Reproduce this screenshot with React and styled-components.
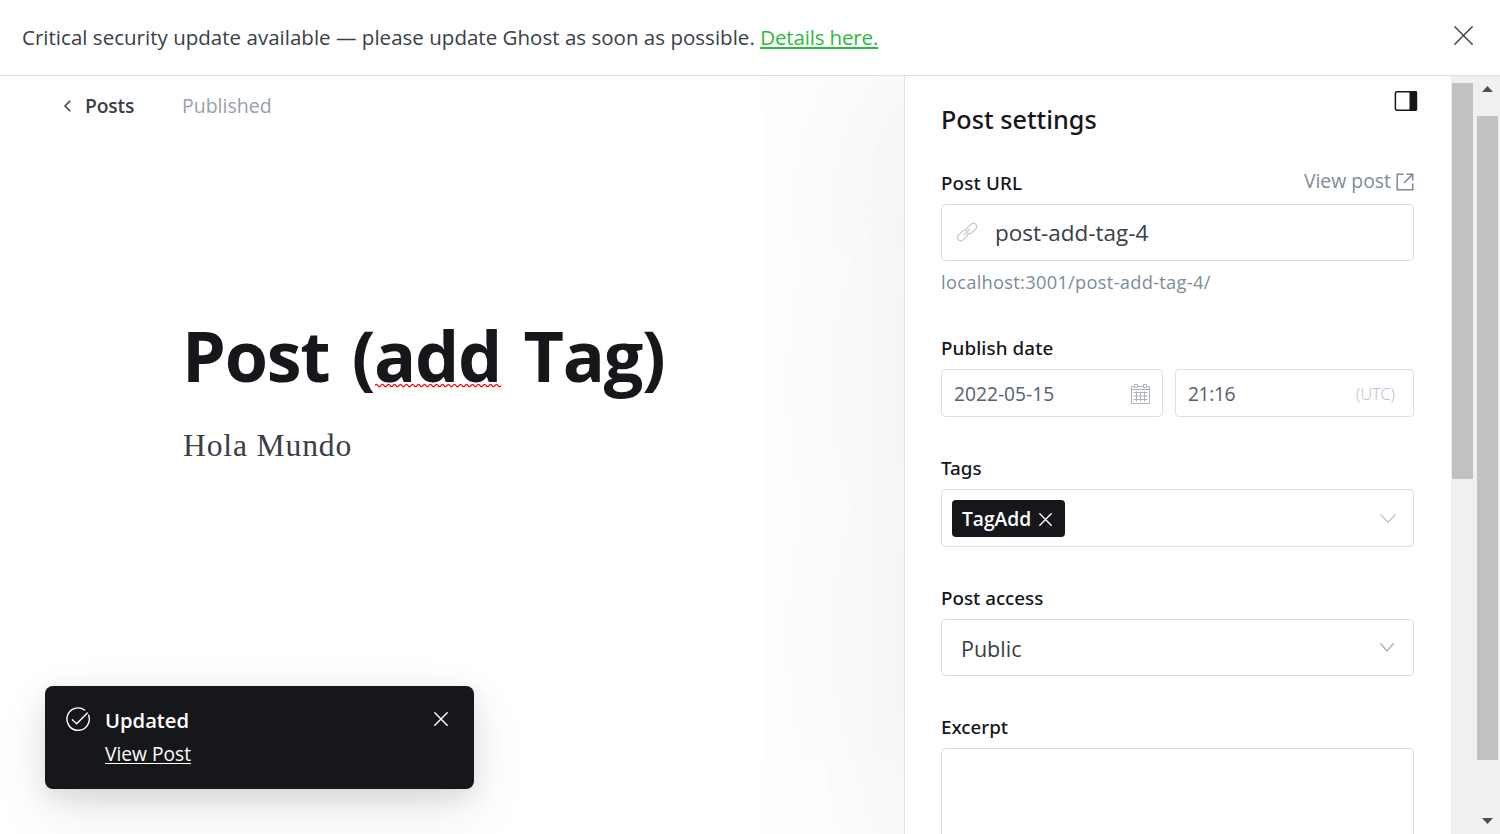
import React from 'react';
import styled, { createGlobalStyle } from 'styled-components';

const GlobalStyle = createGlobalStyle`
  * { box-sizing: border-box; }
  body {
    margin: 0;
    overflow: hidden;
    background: #fff;
    color: #394047;
    font-family: 'Open Sans', 'Noto Sans', sans-serif;
  }
  svg { display: block; flex: none; fill: none; }
`;

const Page = styled.div`
  display: flex;
  flex-direction: column;
  width: 1500px;
  height: 834px;
  overflow: hidden;
`;

const Banner = styled.header`
  display: flex;
  flex: none;
  align-items: center;
  justify-content: space-between;
  height: 76px;
  padding: 0 28px 2px 22px;
  border-bottom: 1px solid #dfe1e3;
  font-size: 20.5px;
  letter-spacing: 0.02px;
  line-height: 28px;
  white-space: pre;
`;

const BannerClose = styled.span`
  margin: 0 -0.5px 2px 0;
`;

const BannerLink = styled.a`
  color: #2bba3c;
  letter-spacing: -0.14px;
  text-decoration: underline;
  text-decoration-thickness: 2px;
  text-underline-offset: 2px;
`;

const Workspace = styled.div`
  display: flex;
  flex: 1;
  min-height: 0;
  overflow: hidden;
`;

const Editor = styled.main`
  display: flex;
  flex: none;
  flex-direction: column;
  width: 904px;
`;

const EditorBar = styled.nav`
  display: flex;
  align-items: center;
  height: 28px;
  margin-top: 16px;
  padding-left: 63px;
  font-size: 19.3px;
  line-height: 28px;
`;

const BackLink = styled.a`
  display: flex;
  align-items: center;
  gap: 13px;
  width: 119px;
  font-weight: 600;
  letter-spacing: -0.15px;
`;

const Status = styled.span`
  color: #95a1ad;
  font-size: 19.5px;
`;

const Title = styled.h1`
  height: 96px;
  margin: 187px 0 0 182px;
  color: #15171a;
  font-size: 70px;
  font-weight: 700;
  letter-spacing: -1.3px;
  line-height: 96px;
  white-space: nowrap;
  word-spacing: 5.5px;
`;

const Misspelled = styled.span`
  position: relative;

  svg {
    position: absolute;
    left: 1px;
    bottom: 15px;
  }
`;

const Body = styled.p`
  margin: 23px 0 0 183px;
  font-family: 'Liberation Serif', serif;
  font-size: 31.6px;
  letter-spacing: 0.85px;
  line-height: 40px;
`;

const Settings = styled.aside`
  flex: none;
  width: 547px;
  height: 776px;
  padding: 14px 37px 0 36px;
  border-left: 1px solid #dfe3e7;
  background: #fff;
  box-shadow: 0 0 300px 50px rgba(0, 0, 0, 0.045), 0 0 120px rgba(0, 0, 0, 0.04);
`;

const SettingsHeader = styled.div`
  display: flex;
  justify-content: space-between;
  height: 48px;
  margin: 0 -4px 33px 0;
`;

const SettingsTitle = styled.h2`
  margin: 11px 0 0;
  color: #15171a;
  font: 500 25.2px/36px 'Noto Sans', sans-serif;
`;

const Field = styled.section`
  margin-bottom: 39px;
`;

const FieldHead = styled.div`
  display: flex;
  justify-content: space-between;
  height: 24px;
  margin-bottom: 9px;
`;

const Label = styled.label`
  color: #15171a;
  font: 500 18.8px/24px 'Noto Sans', sans-serif;
  letter-spacing: ${({ $spacing }) => $spacing || 0}px;
`;

const ViewLink = styled.a`
  display: flex;
  align-items: center;
  gap: 5px;
  height: 21px;
  color: #7c8b9a;
  font-size: 19.4px;
  line-height: 19px;

  span { margin-top: -2px; }
`;

const Control = styled.div`
  display: flex;
  align-items: center;
  height: ${({ $height }) => $height || 57}px;
  padding: ${({ $padding }) => $padding || '0 20px 0 19px'};
  border: 1px solid #dddfe1;
  border-radius: 4px;
  font-size: 21.5px;
  line-height: 30px;
`;

const SpacedControl = styled(Control)`
  justify-content: space-between;
`;

const DateRow = styled.div`
  display: grid;
  grid-template-columns: 222px 239px;
  gap: 12px;
`;

const DateControl = styled(SpacedControl)`
  color: #54606b;
  font-size: 19.2px;
  letter-spacing: ${({ $spacing }) => $spacing || 0}px;
`;

const Slug = styled.span`
  margin: 2px 0 0 18px;
  font-size: 22.5px;
`;

const SelectValue = styled.span`
  margin-top: 2px;
`;

const Zone = styled.span`
  color: #b3bdc6;
  font-size: 16.2px;
  font-weight: 300;
  letter-spacing: 0;
`;

const Help = styled.p`
  margin: 9px 0 42px;
  color: #7c8b9a;
  font-size: 18.3px;
  letter-spacing: 0.28px;
  line-height: 24px;
`;

const Tag = styled.span`
  display: flex;
  align-items: center;
  gap: 8px;
  width: 113px;
  height: 37px;
  padding: 1px 0 0 10px;
  border-radius: 4px;
  background: #15171a;
  color: #fff;
  font-size: 19.2px;
  font-weight: 600;

  svg { margin-top: 2px; }
`;

const TextArea = styled(Control)`
  height: 140px;
`;

const Scrollbars = styled.div`
  display: flex;
  flex: 1;
  gap: 4px;
  padding: 0 2px 0 1px;
  background: #f0f0f0;
`;

const Track = styled.div`
  display: flex;
  flex-direction: column;
  align-items: center;
  width: 21px;
  padding-top: ${({ $top }) => $top}px;
`;

const Thumb = styled.div`
  width: 21px;
  height: ${({ $height }) => $height}px;
  margin: ${({ $margin }) => $margin || 0};
  background: #c1c1c1;
`;

const Toast = styled.div`
  position: absolute;
  top: 686px;
  left: 45px;
  display: flex;
  align-items: flex-start;
  width: 429px;
  height: 103px;
  padding: 21px 26px 0 21px;
  border-radius: 8px;
  background: #15171a;
  box-shadow: 0 0 40px rgba(0, 0, 0, 0.04), 0 10px 24px rgba(0, 0, 0, 0.08),
    0 24px 60px rgba(0, 0, 0, 0.08);
  color: #fff;
`;

const ToastText = styled.div`
  display: flex;
  flex: 1;
  flex-direction: column;
  align-items: flex-start;
  margin: -2px 0 0 15px;
`;

const ToastTitle = styled.strong`
  font-size: 20.2px;
  font-weight: 600;
  line-height: 30px;
`;

const ToastLink = styled.a`
  margin-top: 4px;
  font-size: 19.2px;
  line-height: 30px;
  text-decoration: underline;
  text-decoration-thickness: 1px;
  text-underline-offset: 2px;
  text-decoration-skip-ink: none;
`;

const ToastClose = styled.span`
  margin-top: 5px;
`;

const Cross = ({ size, width = 1.4, color = 'currentColor' }) => (
  <svg width={size} height={size} viewBox={`0 0 ${size} ${size}`} stroke={color} strokeWidth={width} strokeLinecap="round">
    <path d={`M.8.8 ${size - 0.8} ${size - 0.8}M${size - 0.8}.8.8 ${size - 0.8}`} />
  </svg>
);

const Chevron = ({ width, height, stroke }) => (
  <svg width={width} height={height} stroke="#aeb7c1" strokeWidth={stroke} strokeLinecap="round" strokeLinejoin="round">
    <path d={`M.8.8 ${width / 2} ${height - 0.9} ${width - 0.8}.8`} />
  </svg>
);

const BackIcon = () => (
  <svg width="9" height="12" stroke="#394047" strokeWidth="1.6" strokeLinecap="round" strokeLinejoin="round">
    <path d="M6.8 1.2 1.9 6l4.9 4.8" />
  </svg>
);

const PanelIcon = () => (
  <svg width="24" height="22">
    <rect x="1.4" y="1.7" width="21" height="18.6" rx="1.6" stroke="#15171a" strokeWidth="1.5" />
    <path d="M15.5 1h6.2a1.4 1.4 0 0 1 1.4 1.4v17.2a1.4 1.4 0 0 1-1.4 1.4h-6.2z" fill="#15171a" />
  </svg>
);

const ExternalIcon = () => (
  <svg width="18" height="18" stroke="#7c8b9a" strokeWidth="1.5">
    <path d="M7.5 1.2H1.2v15.6h15.6v-6.3M10.5 1.2h6.3v6.3M16.6 1.4 8 10" />
  </svg>
);

const LinkIcon = () => (
  <svg width="20" height="20" viewBox="0 0 20 20" stroke="#c3c7cb" strokeWidth="1.2" strokeLinecap="round" strokeLinejoin="round">
    <path d="M7.1 12.9 12.9 7.1" />
    <path d="M10.9 11.2a3.5 3.5 0 0 1-.9 2.6l-4 4a3.2 3.2 0 0 1-4.6 0 3.3 3.3 0 0 1 0-4.6l4-4a3.5 3.5 0 0 1 3-.9" />
    <path d="M9.1 8.8a3.5 3.5 0 0 1 .9-2.6l4-4a3.2 3.2 0 0 1 4.6 0 3.3 3.3 0 0 1 0 4.6l-4 4a3.5 3.5 0 0 1-3 .9" />
  </svg>
);

const CalendarIcon = () => (
  <svg width="19" height="20" stroke="#aab4be" strokeWidth="1">
    <path d="M3.5 2.5h-3v17h18v-17h-3M6.5 2.5h6M.5 5.5h18" />
    <path d="M3.5.5h3v3h-3zM12.5.5h3v3h-3z" />
    <path d="M2.5 8.5h14M2.5 12h14M2.5 15.5h14M5.5 7.5v10M9.5 7.5v10M13.5 7.5v10" />
  </svg>
);

const CheckIcon = () => (
  <svg width="24" height="24" stroke="#fff" strokeWidth="1.4" strokeLinecap="round" strokeLinejoin="round">
    <path d="M22.6 8.2A11.2 11.2 0 1 1 18.6 3" />
    <path d="m6.4 12.8 4.3 4L21.3 5.9" />
  </svg>
);

const Squiggle = () => (
  <svg width="128" height="5" stroke="#f00" strokeWidth="1.3">
    <path d={'M0 2.5' + Array.from({ length: 21 }, () => 'q1.5-2.4 3 0t3 0').join('')} />
  </svg>
);

const Arrow = ({ down }) => (
  <svg width="11" height="6">
    <path d={down ? 'M0 0h11L5.5 6z' : 'M0 6h11L5.5 0z'} fill="#505050" />
  </svg>
);

export default function App() {
  return (
    <Page>
      <GlobalStyle />
      <Banner>
        <span>
          Critical security update available — please update Ghost as soon as possible.{' '}
          <BannerLink>Details here.</BannerLink>
        </span>
        <BannerClose><Cross size={19} color="#394047" /></BannerClose>
      </Banner>
      <Workspace>
        <Editor>
          <EditorBar>
            <BackLink><BackIcon />Posts</BackLink>
            <Status>Published</Status>
          </EditorBar>
          <Title>Post (<Misspelled>add<Squiggle /></Misspelled> Tag)</Title>
          <Body>Hola Mundo</Body>
        </Editor>
        <Settings>
          <SettingsHeader>
            <SettingsTitle>Post settings</SettingsTitle>
            <PanelIcon />
          </SettingsHeader>
          <FieldHead>
            <Label $spacing={0.15}>Post URL</Label>
            <ViewLink><span>View post</span><ExternalIcon /></ViewLink>
          </FieldHead>
          <Control $padding="0 15px 2px"><LinkIcon /><Slug>post-add-tag-4</Slug></Control>
          <Help>localhost:3001/post-add-tag-4/</Help>
          <Field>
            <FieldHead><Label $spacing={0.1}>Publish date</Label></FieldHead>
            <DateRow>
              <DateControl $height={48} $padding="2px 12px 0 12px">2022-05-15<CalendarIcon /></DateControl>
              <DateControl $height={48} $padding="2px 18px 0 12px" $spacing={-0.35}>21:16<Zone>(UTC)</Zone></DateControl>
            </DateRow>
          </Field>
          <Field>
            <FieldHead><Label>Tags</Label></FieldHead>
            <SpacedControl $height={58} $padding="0 17px 0 10px">
              <Tag>TagAdd<Cross size={13} /></Tag>
              <Chevron width={16} height={9} stroke={1.1} />
            </SpacedControl>
          </Field>
          <Field>
            <FieldHead><Label>Post access</Label></FieldHead>
            <SpacedControl $padding="0 19px 0 19px">
              <SelectValue>Public</SelectValue>
              <Chevron width={14} height={9} stroke={1.5} />
            </SpacedControl>
          </Field>
          <Field>
            <FieldHead><Label>Excerpt</Label></FieldHead>
            <TextArea />
          </Field>
        </Settings>
        <Scrollbars>
          <Track $top={7}><Thumb $height={396} /></Track>
          <Track $top={10}>
            <Arrow />
            <Thumb $height={644} $margin="24px 0 58px" />
            <Arrow down />
          </Track>
        </Scrollbars>
      </Workspace>
      <Toast>
        <CheckIcon />
        <ToastText>
          <ToastTitle>Updated</ToastTitle>
          <ToastLink>View Post</ToastLink>
        </ToastText>
        <ToastClose><Cross size={14} /></ToastClose>
      </Toast>
    </Page>
  );
}
